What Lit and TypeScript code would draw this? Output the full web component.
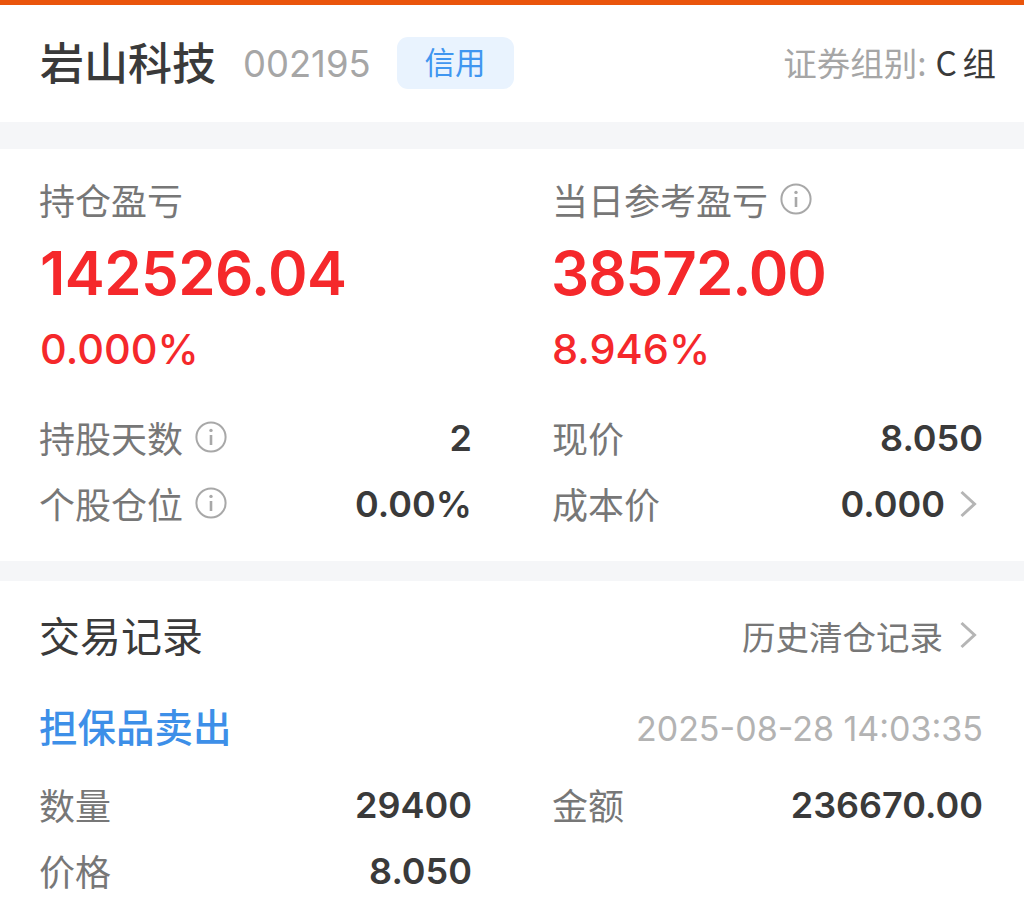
import { LitElement, html, css } from "lit";
import { customElement } from "lit/decorators.js";

const info = html`<svg class="info" viewBox="0 0 32 32" fill="none" stroke="#a8a8a8">
  <circle cx="16" cy="16" r="14.6" stroke-width="2"/>
  <path d="M16 14v10" stroke-width="2.6"/>
  <circle cx="16" cy="9.4" r="1.7" fill="#a8a8a8" stroke="none"/>
</svg>`;
const chev = html`<svg class="chev" viewBox="0 0 18 28" fill="none" stroke="#b5b5b5" stroke-width="3">
  <path d="M2.5 2l13 12-13 12"/>
</svg>`;

@customElement("app-root")
export class AppRoot extends LitElement {
  static styles = css`
    :host { display: block; width: 1024px; height: 915px; overflow: hidden; background: #fff;
      font-family: Inter, "Noto Sans CJK SC", sans-serif; color: #3a3a3a; }
    .top { height: 5px; background: #ea550c; }
    .head { height: 117px; display: flex; align-items: center; padding: 0 28px 0 40px; }
    .name { font-size: 44px; font-weight: 500; color: #3a3a3a; font-family: "Noto Sans CJK SC", sans-serif; margin-bottom: 6px; }
    .code { font-size: 36.4px; color: #a6a6a6; margin-left: 27px; }
    .tag { margin-left: 26px; width: 117px; height: 52px; margin-bottom: 2px; border-radius: 11px; background: #e9f3fe; color: #4096f0;
      font-size: 30.5px; display: flex; align-items: center; justify-content: center; padding-bottom: 4px; box-sizing: border-box; font-family: "Noto Sans CJK SC", sans-serif; }
    .group { margin-left: auto; font-size: 33.5px; color: #a6a6a6; font-family: "Noto Sans CJK SC", sans-serif; display: flex; align-items: center; margin-bottom: 5px; white-space: pre; }
    .group b { font-weight: 400; color: #3a3a3a; margin-left: 9px; word-spacing: -2px; }
    .band { background: #f5f6f8; }
    .b1 { height: 27px; } .b2 { height: 20px; }
    .stats { height: 412px; box-sizing: border-box; padding: 27px 41px 0 39px; }
    .cols { display: grid; grid-template-columns: 433px 431px; column-gap: 80px; }
    .lab { font-size: 36px; color: #777; line-height: 46px; display: flex; align-items: center; font-family: "Noto Sans CJK SC", sans-serif; white-space: nowrap; }
    .big { font-size: 60px; font-weight: 560; color: #f5282b; line-height: 76px; margin: 13px 0 0 1px; letter-spacing: -.55px; }
    .big.tight { letter-spacing: -1px; margin-left: -1px; }
    .pct { font-size: 41.5px; font-weight: 500; color: #f5282b; line-height: 50px; margin: 13px 0 0 1px; }
    .pct.r { margin-left: 0; }
    .rows { margin-top: 41px; display: grid; grid-template-columns: 433px 431px; column-gap: 80px; row-gap: 20px; }
    .row { display: flex; align-items: center; justify-content: space-between; height: 46px; }
    .row .lab { margin-bottom: 3px; }
    .val { font-size: 36px; font-weight: 580; color: #3a3a3a; display: flex; align-items: center; white-space: nowrap; }
    .info { width: 32px; height: 32px; margin-left: 12px; flex: none; }
    .chev { width: 18px; height: 28px; margin: 0 6px 0 16px; flex: none; }
    .val .chev { margin-left: 14px; }
    .rec { padding: 0 41px 0 39px; }
    .rechead { height: 112px; display: flex; align-items: center; justify-content: space-between; }
    .title { font-size: 41px; font-weight: 400; color: #3a3a3a; font-family: "Noto Sans CJK SC", sans-serif; margin-bottom: 6px; }
    .hist { font-size: 33.5px; color: #777; display: flex; align-items: center; font-family: "Noto Sans CJK SC", sans-serif; margin-bottom: 4px; }
    .kind { display: flex; align-items: center; justify-content: space-between; height: 46px; margin-top: 12px; }
    .sell { font-size: 38.5px; font-weight: 500; color: #3d8fe8; font-family: "Noto Sans CJK SC", sans-serif; margin-bottom: 6px; }
    .time { font-size: 34px; color: #b3b3b3; }
    .rows.rows2 { margin-top: 31px; }
  `;

  render() {
    return html`
      <div class="top"></div>
      <div class="head">
        <span class="name">岩山科技</span>
        <span class="code">002195</span>
        <span class="tag">信用</span>
        <span class="group">证券组别:<b>C 组</b></span>
      </div>
      <div class="band b1"></div>
      <div class="stats">
        <div class="cols">
          <div>
            <div class="lab">持仓盈亏</div>
            <div class="big">142526.04</div>
            <div class="pct">0.000%</div>
          </div>
          <div>
            <div class="lab">当日参考盈亏${info}</div>
            <div class="big tight">38572.00</div>
            <div class="pct r">8.946%</div>
          </div>
        </div>
        <div class="rows">
          <div class="row"><span class="lab">持股天数${info}</span><span class="val">2</span></div>
          <div class="row"><span class="lab">现价</span><span class="val">8.050</span></div>
          <div class="row"><span class="lab">个股仓位${info}</span><span class="val">0.00%</span></div>
          <div class="row"><span class="lab">成本价</span><span class="val">0.000${chev}</span></div>
        </div>
      </div>
      <div class="band b2"></div>
      <div class="rec">
        <div class="rechead">
          <span class="title">交易记录</span>
          <span class="hist">历史清仓记录${chev}</span>
        </div>
        <div class="kind">
          <span class="sell">担保品卖出</span>
          <span class="time">2025-08-28 14:03:35</span>
        </div>
        <div class="rows rows2">
          <div class="row"><span class="lab">数量</span><span class="val">29400</span></div>
          <div class="row"><span class="lab">金额</span><span class="val">236670.00</span></div>
          <div class="row"><span class="lab">价格</span><span class="val">8.050</span></div>
        </div>
      </div>
    `;
  }
}
